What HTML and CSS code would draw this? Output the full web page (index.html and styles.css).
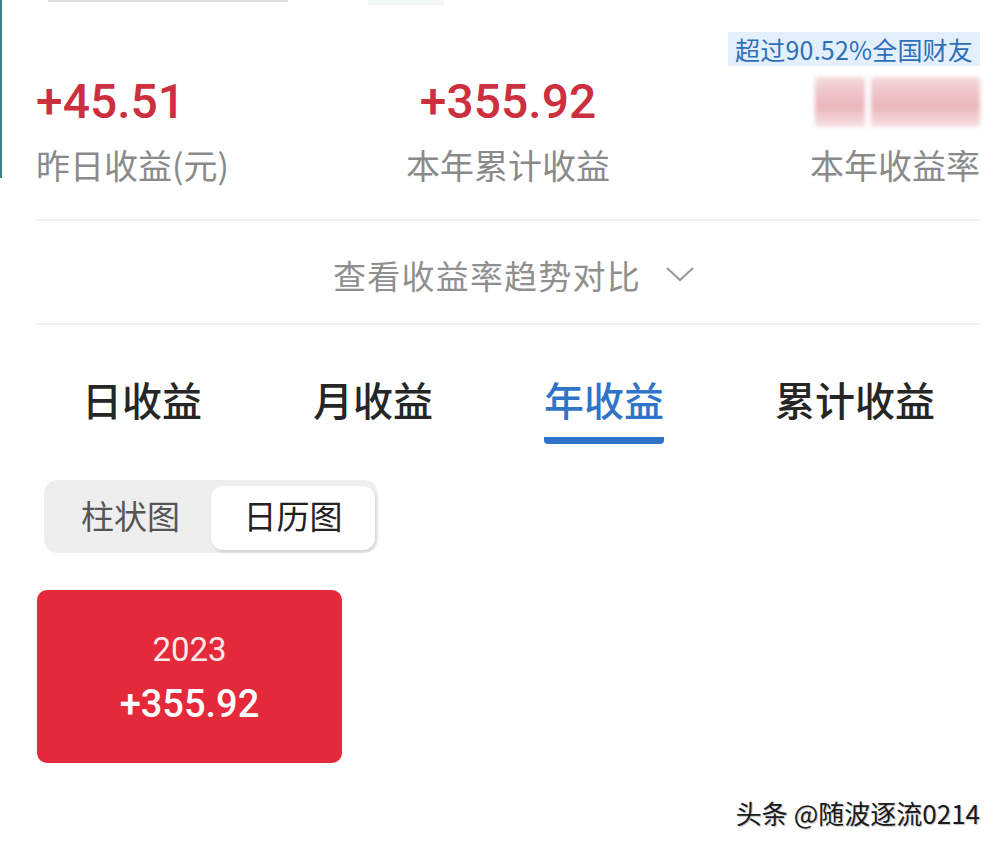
FILE: index.html
```html
<!DOCTYPE html>
<html lang="zh-CN">
<head>
<meta charset="utf-8">
<title>收益</title>
<link rel="stylesheet" href="styles.css">
</head>
<body>
<div class="page">
  <div class="edge-line"></div>
  <div class="top-strip">
    <div class="top-seg"></div>
    <div class="top-seg faint"></div>
  </div>

  <section class="stats">
    <div class="badge-row"><span class="badge">超过90.52%全国财友</span></div>
    <div class="stat-grid">
      <div class="stat left">
        <div class="num">+45.51</div>
        <div class="label">昨日收益(元)</div>
      </div>
      <div class="stat center">
        <div class="num">+355.92</div>
        <div class="label">本年累计收益</div>
      </div>
      <div class="stat right">
        <div class="num blurred"><span class="blur-box"></span></div>
        <div class="label">本年收益率</div>
      </div>
    </div>
  </section>

  <div class="trend">
    <span>查看收益率趋势对比</span>
    <svg class="chev" width="30" height="18" viewBox="0 0 30 18"><path d="M2 3 L15 15 L28 3" fill="none" stroke="#9a9a9a" stroke-width="2.2"/></svg>
  </div>

  <nav class="tabs">
    <div class="tab">日收益</div>
    <div class="tab">月收益</div>
    <div class="tab active">年收益</div>
    <div class="tab">累计收益</div>
  </nav>

  <div class="seg">
    <div class="seg-item">柱状图</div>
    <div class="seg-item on">日历图</div>
  </div>

  <div class="year-card">
    <div class="yc-year">2023</div>
    <div class="yc-val">+355.92</div>
  </div>

  <div class="watermark">头条 @随波逐流0214</div>
</div>
</body>
</html>
```
FILE: styles.css
```css
html, body {
  margin: 0;
  padding: 0;
  background: #ffffff;
}
body {
  font-family: "Noto Sans CJK SC", "Noto Sans", sans-serif;
  width: 1002px;
  height: 846px;
  overflow: hidden;
}
.page {
  position: relative;
  height: 846px;
  padding: 0 22px 0 36px;
}
.edge-line {
  position: absolute;
  left: 0;
  top: 0;
  width: 2px;
  height: 178px;
  background: #3d7d8c;
}
.top-strip {
  display: flex;
  height: 2px;
  padding-left: 12px;
  gap: 80px;
}
.top-seg {
  width: 240px;
  height: 2px;
  background: #dedede;
}
.top-seg.faint {
  width: 76px;
  height: 5px;
  background: #f3f7f6;
}
.stats {
  padding-top: 30px;
  border-bottom: 2px solid #efefef;
  padding-bottom: 30px;
}
.badge-row {
  display: flex;
  justify-content: flex-end;
}
.badge {
  background: #e3f0fb;
  color: #2d6fb8;
  font-size: 25px;
  line-height: 34px;
  height: 34px;
  padding: 0 7px;
  letter-spacing: 0.2px;
}
.stat-grid {
  display: grid;
  grid-template-columns: 1fr 1fr 1fr;
  margin-top: 8px;
}
.stat {
  display: flex;
  flex-direction: column;
}
.stat.left { align-items: flex-start; }
.stat.center { align-items: center; }
.stat.right { align-items: flex-end; }
.num {
  font-family: Roboto, "Liberation Sans", sans-serif;
  font-weight: 500;
  font-size: 48px;
  line-height: 56px;
  height: 56px;
  color: #cc2f3d;
}
.num.blurred {
  display: flex;
  align-items: center;
}
.blur-box {
  display: block;
  width: 165px;
  height: 50px;
  background:
    linear-gradient(90deg, rgba(255,255,255,0) 0, rgba(255,255,255,0) 30%, #ffffff 30%, #ffffff 34%, rgba(255,255,255,0) 34%),
    linear-gradient(180deg, #f5dadd 0%, #eec1c6 35%, #eab8bd 60%, #f6dfe1 100%);
  filter: blur(2px);
  border-radius: 4px;
}
.label {
  margin-top: 11px;
  font-size: 34px;
  line-height: 48px;
  color: #8a8a8a;
}
.trend {
  display: flex;
  align-items: center;
  justify-content: center;
  gap: 24px;
  height: 104px;
  padding-top: 6px;
  padding-left: 12px;
  box-sizing: border-box;
  border-bottom: 2px solid #efefef;
  color: #8f8f8f;
  font-size: 33px;
}
.trend span { letter-spacing: 1.2px; }
.chev { margin-top: -2px; }
.tabs {
  display: flex;
  justify-content: space-between;
  padding: 46px 45px 0 46px;
}
.tab {
  font-size: 40px;
  line-height: 56px;
  color: #262626;
  font-weight: 500;
  padding-bottom: 10px;
  border-bottom: 7px solid transparent;
}
.tab.active {
  color: #2f74c6;
  border-bottom-color: #2f74c6;
  border-radius: 4px;
}
.seg {
  display: inline-flex;
  margin: 36px 0 0 8px;
  background: #eeeeee;
  border-radius: 14px;
  padding: 6px 3px 3px 6px;
}
.seg-item {
  width: 160px;
  height: 64px;
  display: flex;
  align-items: center;
  justify-content: center;
  padding-bottom: 6px;
  box-sizing: border-box;
  font-size: 33px;
  color: #555555;
  border-radius: 12px;
}
.seg-item:first-child { width: 161px; }
.seg-item.on {
  background: #ffffff;
  color: #222222;
  width: 164px;
  box-shadow: 1px 2px 3px rgba(0,0,0,0.12);
}
.year-card {
  margin: 37px 0 0 1px;
  width: 305px;
  height: 173px;
  background: #e42a3a;
  border-radius: 10px;
  display: flex;
  flex-direction: column;
  align-items: center;
  justify-content: center;
  color: #ffffff;
  font-family: Roboto, "Liberation Sans", sans-serif;
}
.yc-year {
  font-size: 33px;
  line-height: 40px;
  color: #fbe9ea;
  margin-top: 4px;
}
.yc-val {
  font-size: 38px;
  line-height: 48px;
  font-weight: 500;
  margin-top: 10px;
}
.watermark {
  position: absolute;
  right: 22px;
  top: 795px;
  font-size: 26px;
  line-height: 36px;
  color: #1a1a1a;
  text-shadow: 1px 1px 1px rgba(0,0,0,0.25);
}
```
